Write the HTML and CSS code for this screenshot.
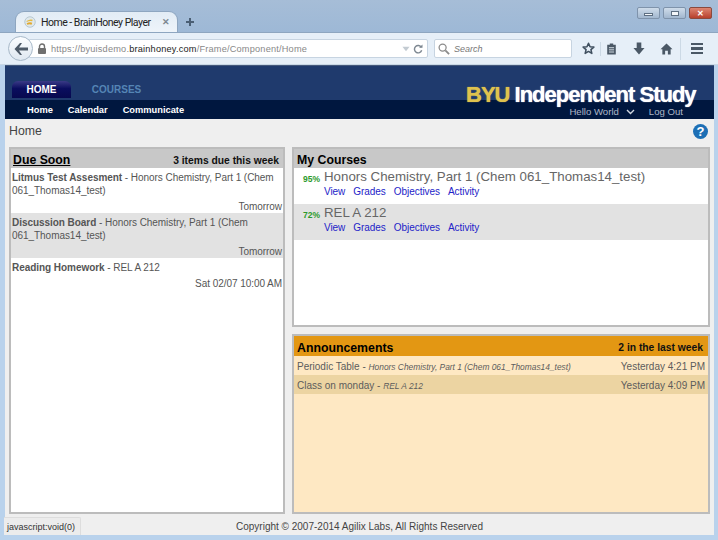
FILE: index.html
```html
<!DOCTYPE html>
<html>
<head>
    <meta charset="utf-8">
    <title>Home - BrainHoney Player</title>
    <link rel="stylesheet" href="styles.css">
</head>
<body>
    <div class="window">
        <div class="titlebar">
            <div class="tabstrip">
                <div class="tab">
                    <svg class="favicon" width="16" height="16" viewBox="0 0 16 16">
                        <circle cx="8" cy="8" r="7" fill="#dfe8ec" stroke="#a9bcc6"/>
                        <path d="M3.5 6.5 Q8 3.5 11.5 5 L11 7 Q7 6 3.5 8 Z" fill="#e6b93c"/>
                        <path d="M3.5 9.5 Q8 7.5 11 9 L10 11.5 Q7 10.5 4.5 11.5 Z" fill="#e2a92e"/>
                    </svg>
                    <span class="tab-title">Home - BrainHoney Player</span>
                    <span class="tab-close">&#10005;</span>
                </div>
                <svg class="new-tab" width="10" height="10" viewBox="0 0 10 10">
                    <path d="M5 1 V9 M1 5 H9" stroke="#4b5f74" stroke-width="2"/>
                </svg>
            </div>
            <div class="win-buttons">
                <div class="win-btn"><span class="win-min"></span></div>
                <div class="win-btn"><span class="win-max"></span></div>
                <div class="win-btn win-close">&#10005;</div>
            </div>
        </div>

        <div class="toolbar">
            <div class="back">
                <svg width="16" height="14" viewBox="0 0 16 14">
                    <path d="M7 1 L1.5 7 L7 13 L9 13 L6 8.6 H15 V5.4 H6 L9 1 Z" fill="#4d5a68"/>
                </svg>
            </div>
            <div class="urlbar">
                <svg class="lock" width="10" height="11" viewBox="0 0 10 11">
                    <path d="M2.5 5 V3.5 A2.5 2.5 0 0 1 7.5 3.5 V5" fill="none" stroke="#6f6f6f" stroke-width="1.4"/>
                    <rect x="1" y="5" width="8" height="6" rx="1" fill="#6f6f6f"/>
                </svg>
                <span class="url">https://byuisdemo.<b>brainhoney.com</b>/Frame/Component/Home</span>
                <svg class="url-drop" width="8" height="6" viewBox="0 0 9 6"><path d="M0.5 0.5 H8.5 L4.5 5.5 Z" fill="#c3cbd2"/></svg>
                <svg class="reload" width="10" height="10" viewBox="0 0 12 12">
                    <path d="M10 4 A4.4 4.4 0 1 0 10.4 7.5" fill="none" stroke="#7d8791" stroke-width="1.7"/>
                    <path d="M7.2 4.6 H11.4 V0.6 Z" fill="#7d8791"/>
                </svg>
            </div>
            <div class="searchbar">
                <svg width="12" height="12" viewBox="0 0 13 13">
                    <circle cx="5" cy="5" r="3.8" fill="none" stroke="#8b8b8b" stroke-width="1.4"/>
                    <path d="M8 8 L12 12" stroke="#8b8b8b" stroke-width="2"/>
                </svg>
                <span class="search-text">Search</span>
            </div>
            <div class="tools">
                <svg class="tool-star" width="13" height="13" viewBox="0 0 16 16">
                    <path d="M8 1.6 L9.9 5.9 L14.6 6.3 L11 9.4 L12.1 14 L8 11.6 L3.9 14 L5 9.4 L1.4 6.3 L6.1 5.9 Z" fill="none" stroke="#3f4f5f" stroke-width="1.9" stroke-linejoin="round"/>
                </svg>
                <span class="tool-sep"></span>
                <svg class="tool-clip" width="11" height="12" viewBox="0 0 12 14">
                    <path d="M4 0.5 H8 V2 H11 V13.5 H1 V2 H4 Z" fill="#4a5866"/>
                    <path d="M3 5.5 H9 M3 8 H9 M3 10.5 H9" stroke="#e9f1f8" stroke-width="1"/>
                </svg>
                <svg class="tool-down" width="12" height="13" viewBox="0 0 13 14">
                    <path d="M4 0.5 H9 V6.5 H12.5 L6.5 13.5 L0.5 6.5 H4 Z" fill="#4a5866"/>
                </svg>
                <svg class="tool-home" width="13" height="12" viewBox="0 0 14 13">
                    <path d="M7 0.5 L13.5 6.8 H11.5 V12.5 H8.5 V8.5 H5.5 V12.5 H2.5 V6.8 H0.5 Z" fill="#4a5866"/>
                </svg>
                <span class="tool-sep tool-sep-wide"></span>
                <div class="tool-menu"><span></span><span></span><span></span></div>
            </div>
        </div>

        <div class="page">
            <div class="banner">
                <div class="main-tabs">
                    <a class="main-tab active">HOME</a>
                    <a class="main-tab">COURSES</a>
                </div>
                <div class="logo"><span class="logo-byu">BYU</span> Independent Study</div>
            </div>
            <div class="subnav">
                <div class="subnav-links">
                    <a>Home</a>
                    <a>Calendar</a>
                    <a>Communicate</a>
                </div>
                <div class="user-links">
                    <a>Hello World</a>
                    <svg width="9" height="6" viewBox="0 0 9 6"><path d="M1 1 L4.5 4.5 L8 1" fill="none" stroke="#cfd6e0" stroke-width="1.4"/></svg>
                    <a class="logout">Log Out</a>
                </div>
            </div>
            <div class="page-title">
                <span>Home</span>
                <span class="help">?</span>
            </div>
            <div class="columns">
                <div class="panel due">
                    <div class="panel-head">
                        <span class="panel-title due-title">Due Soon</span>
                        <span class="panel-note">3 items due this week</span>
                    </div>
                    <div class="due-item">
                        <div><b>Litmus Test Assesment</b> - Honors Chemistry, Part 1 (Chem 061_Thomas14_test)</div>
                        <div class="due-date">Tomorrow</div>
                    </div>
                    <div class="due-item alt">
                        <div><b>Discussion Board</b> - Honors Chemistry, Part 1 (Chem 061_Thomas14_test)</div>
                        <div class="due-date">Tomorrow</div>
                    </div>
                    <div class="due-item">
                        <div><b>Reading Homework</b> - REL A 212</div>
                        <div class="due-date">Sat 02/07 10:00 AM</div>
                    </div>
                </div>
                <div class="right-col">
                    <div class="panel courses">
                        <div class="panel-head">
                            <span class="panel-title">My Courses</span>
                        </div>
                        <div class="course">
                            <span class="grade">95%</span>
                            <div>
                                <div class="course-name">Honors Chemistry, Part 1 (Chem 061_Thomas14_test)</div>
                                <div class="course-links"><a>View</a><a>Grades</a><a>Objectives</a><a>Activity</a></div>
                            </div>
                        </div>
                        <div class="course alt">
                            <span class="grade">72%</span>
                            <div>
                                <div class="course-name">REL A 212</div>
                                <div class="course-links"><a>View</a><a>Grades</a><a>Objectives</a><a>Activity</a></div>
                            </div>
                        </div>
                    </div>
                    <div class="panel announce">
                        <div class="panel-head">
                            <span class="panel-title">Announcements</span>
                            <span class="panel-note">2 in the last week</span>
                        </div>
                        <div class="announce-item">
                            <span>Periodic Table - <i>Honors Chemistry, Part 1 (Chem 061_Thomas14_test)</i></span>
                            <span>Yesterday 4:21 PM</span>
                        </div>
                        <div class="announce-item alt">
                            <span>Class on monday - <i>REL A 212</i></span>
                            <span>Yesterday 4:09 PM</span>
                        </div>
                    </div>
                </div>
            </div>
            <div class="footer">Copyright &copy; 2007-2014 Agilix Labs, All Rights Reserved</div>
            <div class="status">javascript:void(0)</div>
        </div>
    </div>
</body>
</html>
```

FILE: styles.css
```css
html, body {
    margin: 0;
    padding: 0;
}

body {
    font-family: "Liberation Sans", Arial, sans-serif;
    background-color: #b9d2ec;
    overflow: hidden;
}

.window {
    width: 718px;
    height: 540px;
    display: flex;
    flex-direction: column;
    padding: 0 4px 5px 4px;
    box-sizing: border-box;
    background: linear-gradient(to bottom, #a6bdd7 0, #9db8d6 33px, #b9d2ec 66px);
}

/* browser chrome */
.titlebar {
    height: 33px;
    flex: none;
    display: flex;
    justify-content: space-between;
    align-items: flex-end;
    margin: 0 -4px;
    padding: 0 6px 0 15px;
    border-bottom: 1px solid #8ea6c0;
    box-sizing: border-box;
}

.tabstrip {
    display: flex;
    align-items: center;
}

.tab {
    width: 163px;
    height: 21px;
    box-sizing: border-box;
    display: flex;
    align-items: center;
    padding: 0 8px 0 8px;
    background: linear-gradient(to bottom, #e2ecf5, #eef4fa);
    border: 1px solid #8ea6c0;
    border-bottom: none;
    border-radius: 9px 9px 0 0;
    font-family: Roboto, "Liberation Sans", sans-serif;
    font-size: 10.5px;
    letter-spacing: -0.5px;
    color: #222;
}

.favicon {
    flex: none;
    margin-right: 5px;
    width: 12px;
    height: 12px;
}

.tab-title {
    flex: 1;
    white-space: nowrap;
}

.tab-close {
    color: #7d8791;
    font-size: 9px;
    font-weight: bold;
}

.new-tab {
    margin-left: 7px;
}

.win-buttons {
    display: flex;
    gap: 3px;
    align-self: flex-start;
    margin-top: 7px;
}

.win-btn {
    width: 21px;
    height: 10px;
    border: 1px solid #7f93ab;
    border-radius: 2px;
    background: linear-gradient(to bottom, #cfdcea, #a2b7cf);
    display: flex;
    align-items: center;
    justify-content: center;
}

.win-min {
    width: 7px;
    height: 1px;
    margin-top: 3px;
    background: #f4f7fa;
    border: 1px solid #5e6f82;
}

.win-max {
    width: 6px;
    height: 3px;
    background: #f4f7fa;
    border: 1px solid #5e6f82;
}

.win-close {
    background: linear-gradient(to bottom, #dd8672, #b8402c);
    border-color: #8a4a3e;
    color: #fff;
    font-size: 8px;
    font-weight: bold;
}

.toolbar {
    height: 32px;
    flex: none;
    margin: 0 -4px;
    padding: 0 4px 0 8px;
    display: flex;
    align-items: center;
    box-sizing: border-box;
    background: #e6eff8;
    border-bottom: 1px solid #c9d8e6;
}

.back {
    width: 23px;
    height: 23px;
    flex: none;
    border-radius: 50%;
    border: 1px solid #a8b9c9;
    background: linear-gradient(to bottom, #fbfdff, #dfe8f1);
    display: flex;
    align-items: center;
    justify-content: center;
    margin-right: -4px;
    z-index: 1;
}

.urlbar {
    width: 399px;
    height: 19px;
    flex: none;
    box-sizing: border-box;
    border: 1px solid #c7d4e1;
    border-radius: 0 2px 2px 0;
    background: #fff;
    display: flex;
    align-items: center;
    padding: 0 4px 0 7px;
}

.lock {
    margin-right: 4px;
}

.url {
    flex: 1;
    padding-top: 1px;
    font-size: 9.2px;
    color: #888;
    letter-spacing: 0.2px;
    white-space: nowrap;
}

.url b {
    font-weight: normal;
    color: #222;
}

.url-drop {
    margin-right: 3px;
}

.searchbar {
    width: 138px;
    height: 19px;
    flex: none;
    margin-left: 6px;
    box-sizing: border-box;
    border: 1px solid #c7d4e1;
    border-radius: 2px;
    background: #fff;
    display: flex;
    align-items: center;
    padding: 0 3px;
    gap: 4px;
}

.search-text {
    padding-top: 1px;
    font-size: 9px;
    font-style: italic;
    color: #777;
}

.tools {
    flex: 1;
    display: flex;
    align-items: center;
    padding-left: 10px;
}

.tool-sep {
    width: 1px;
    height: 14px;
    margin: 0 5px 0 5px;
    background: #ccd9e5;
}

.tool-down {
    margin-left: 16px;
}

.tool-home {
    margin-left: 15px;
}

.tool-sep-wide {
    height: 22px;
    margin: 0 10px 0 7px;
}

.tool-menu {
    display: flex;
    flex-direction: column;
    gap: 2px;
}

.tool-menu span {
    width: 12px;
    height: 2.5px;
    background: #4a5866;
}

/* page */
.page {
    flex: 1;
    min-height: 0;
    margin-left: 1px;
    position: relative;
    display: flex;
    flex-direction: column;
    background: #efefef;
}

.banner {
    height: 35px;
    flex: none;
    position: relative;
    background: #1f3a6d;
    border-top: 1px solid #45597c;
    box-sizing: border-box;
    display: flex;
    align-items: flex-end;
    padding-left: 7px;
}

.main-tabs {
    display: flex;
    align-items: flex-end;
}

.main-tab {
    height: 17px;
    line-height: 17px;
    width: 59px;
    margin-bottom: 2px;
    text-align: center;
    font-size: 10px;
    font-weight: bold;
    color: #fff;
}

.main-tab.active {
    background: linear-gradient(to bottom, #3a3a86 0, #0a0d5e 45%, #07094f 100%);
    border-radius: 6px 6px 0 0;
}

.main-tab:not(.active) {
    margin-left: 16px;
    color: #5585b5;
}

.logo {
    position: absolute;
    left: 461px;
    top: 18px;
    font-size: 22px;
    font-weight: bold;
    letter-spacing: -1px;
    line-height: 22px;
    color: #fff;
    text-shadow: 0 0 1px #fff;
    white-space: nowrap;
    z-index: 1;
}

.logo-byu {
    color: #dfc24e;
    text-shadow: 0 0 1px #dfc24e;
}

.subnav {
    height: 19px;
    flex: none;
    background: #00173f;
    display: flex;
    justify-content: space-between;
    align-items: center;
    padding: 0 31px 0 22px;
    font-size: 9.3px;
}

.subnav-links {
    display: flex;
    gap: 15px;
    font-weight: bold;
    color: #fff;
}

.user-links {
    display: flex;
    align-items: center;
    margin-top: 4px;
    font-size: 9.6px;
    line-height: 11px;
    color: #aeb8c8;
    z-index: 2;
}

.user-links svg {
    margin-left: 7px;
}

.logout {
    margin-left: 14px;
}

.page-title {
    height: 28px;
    flex: none;
    display: flex;
    justify-content: space-between;
    align-items: center;
    padding: 0 6px 4px 4px;
    box-sizing: border-box;
    font-size: 12.3px;
    color: #444;
}

.help {
    width: 15px;
    height: 15px;
    border-radius: 50%;
    background: #1d6fb5;
    color: #fff;
    font-size: 13px;
    font-weight: bold;
    line-height: 15px;
    text-align: center;
}

.columns {
    height: 367px;
    flex: none;
    display: flex;
    gap: 7px;
    padding: 0 4px;
}

.panel {
    box-sizing: border-box;
    border: 2px solid #bcbcbc;
    background: #fff;
    font-size: 10px;
    color: #555;
}

.due {
    width: 276px;
    flex: none;
}

.right-col {
    flex: 1;
    display: flex;
    flex-direction: column;
    gap: 7px;
}

.courses, .announce {
    flex: 1;
}

.panel-head {
    height: 19px;
    box-sizing: border-box;
    padding: 3px 4px 0 3px;
    display: flex;
    justify-content: space-between;
    align-items: center;
    background: #c8c8c8;
}

.panel-title {
    font-size: 12.3px;
    font-weight: bold;
    color: #000;
}

.due-title {
    text-decoration: underline;
    margin-left: -1px;
}

.panel-note {
    font-size: 10.3px;
    font-weight: bold;
    color: #111;
}

.due-item {
    padding: 3px 1px 0 1px;
    font-size: 10px;
    letter-spacing: -0.05px;
    line-height: 13px;
}

.due-item.alt, .course.alt {
    background: #e2e2e2;
}

.due-date {
    text-align: right;
    margin-top: 3px;
}

.course {
    height: 36px;
    box-sizing: border-box;
    display: flex;
    align-items: flex-start;
    padding: 1px 0 0 9px;
}

.grade {
    width: 21px;
    flex: none;
    margin-top: 5px;
    font-size: 8.5px;
    font-weight: bold;
    color: #2b9a2b;
}

.course-name {
    font-size: 13.3px;
    line-height: 16px;
    color: #666;
}

.course-links {
    display: flex;
    gap: 8px;
    font-size: 10px;
    letter-spacing: -0.05px;
    line-height: 13px;
    color: #2323c8;
}

.announce {
    background: #fee8c3;
}

.announce .panel-head {
    background: #e39713;
    height: 20px;
    padding-right: 5px;
}

.announce-item {
    height: 19px;
    box-sizing: border-box;
    display: flex;
    justify-content: space-between;
    align-items: center;
    padding: 1px 3px 0 3px;
    color: #5c5c5c;
    background: #fee8c3;
}

.announce-item i {
    font-size: 8.4px;
}

.announce-item.alt {
    background: #ecd4a2;
}

.footer {
    flex: 1;
    display: flex;
    align-items: center;
    justify-content: center;
    padding-top: 4px;
    font-size: 10px;
    color: #444;
}

.status {
    position: absolute;
    left: -1px;
    bottom: 0;
    height: 17px;
    line-height: 18px;
    padding: 0 5px 0 3px;
    font-size: 9px;
    color: #333;
    background: #ececec;
    border-top: 1px solid #ddd;
    border-right: 1px solid #ddd;
    border-radius: 0 2px 0 0;
}
```
